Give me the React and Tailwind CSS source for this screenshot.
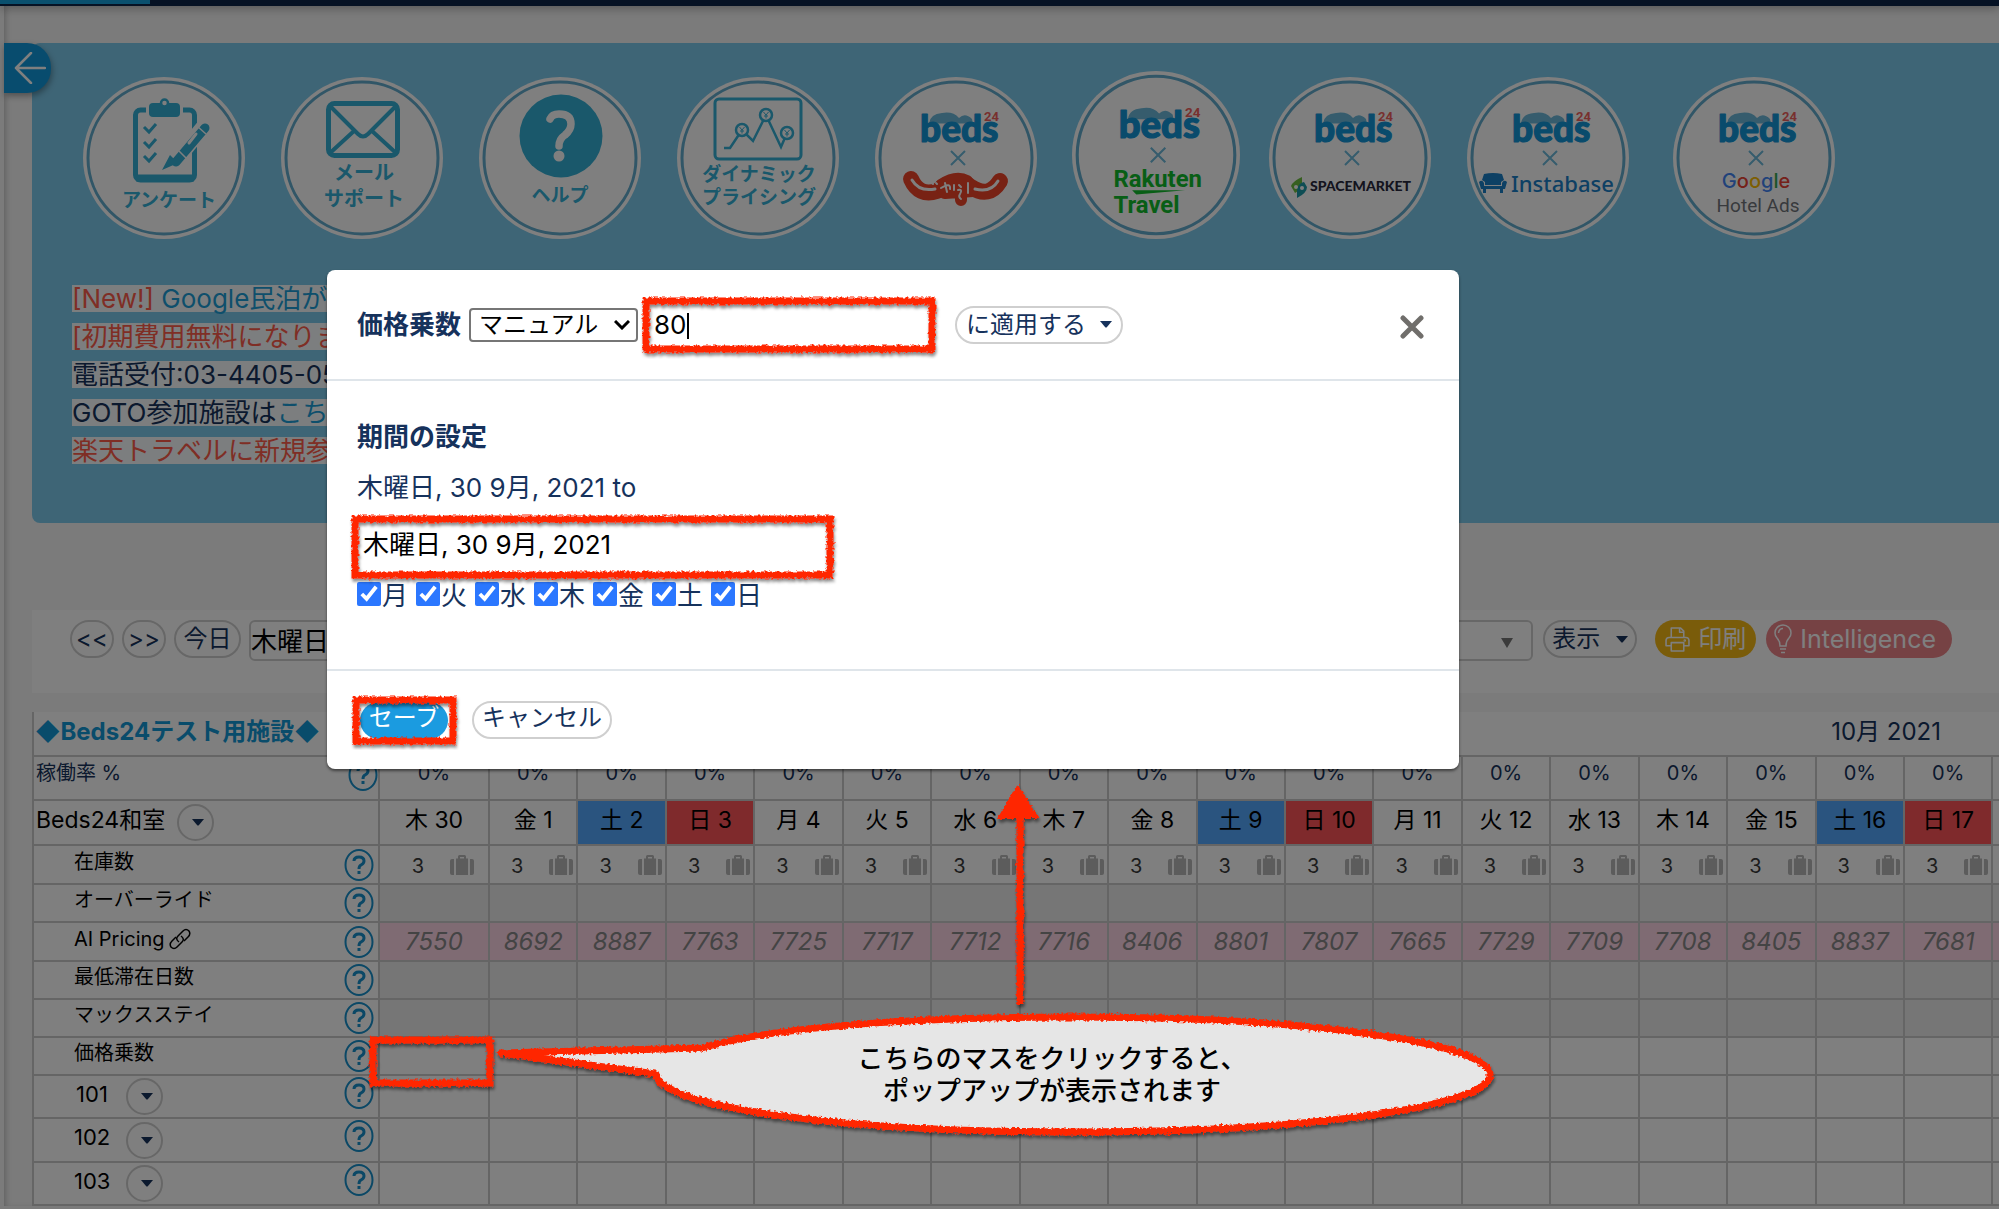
import React from "react";

const TEAL = "#34b0d6";
const BEDS = "#1296d8";
const SKY = "#6cb9da";

const DAYS = [
  ["木 30", "7550"], ["金 1", "8692"], ["土 2", "8887"], ["日 3", "7763"], ["月 4", "7725"],
  ["火 5", "7717"], ["水 6", "7712"], ["木 7", "7716"], ["金 8", "8406"], ["土 9", "8801"],
  ["日 10", "7807"], ["月 11", "7665"], ["火 12", "7729"], ["水 13", "7709"], ["木 14", "7708"],
  ["金 15", "8405"], ["土 16", "8837"], ["日 17", "7681"], ["", ""],
];

function Badge({ label, large, children }) {
  return (
    <button type="button" aria-label={label} className={large ? "block size-[168px]" : "block size-[162px]"}>
      <svg viewBox="0 0 162 162" className="size-full">
        <circle cx="81" cy="81" r="81" fill="#fff" />
        <circle cx="81" cy="81" r="76" fill="none" stroke="#62acce" strokeWidth="3" />
        {children}
      </svg>
    </button>
  );
}

function Caption({ y, size = 19, x = 83, children }) {
  return (
    <text x={x} y={y} textAnchor="middle" fontSize={size} fontWeight="700" fill={TEAL}>
      {children}
    </text>
  );
}

function BedsLogo() {
  return (
    <g>
      <path d="M54 46.500 Q55 37 67 36 Q78 34 84 41 Q90 35 97 42 L98 46.500 Z" fill={SKY} />
      <text x="45" y="65" fontFamily="Lato" fontWeight="900" fontSize="37" fill={BEDS} stroke={BEDS} strokeWidth="1.200" strokeLinejoin="round">beds</text>
      <text x="109" y="44" fontFamily="Roboto" fontWeight="700" fontSize="13" fill="#f0605c">24</text>
      <path d="M76 74 L90 88 M90 74 L76 88" stroke={SKY} strokeWidth="2" fill="none" />
    </g>
  );
}

function Yen({ x, y }) {
  return (
    <g>
      <circle cx={x} cy={y} r="6" fill="#fff" />
      <path d={`M${x - 2.5} ${y - 3} L${x} ${y} L${x + 2.5} ${y - 3} M${x} ${y} V${y + 3.5} M${x - 2} ${y + 1} H${x + 2}`} strokeWidth="1" />
    </g>
  );
}

function Badges() {
  return (
    <ul className="flex items-end">
      <li className="w-[198px] shrink-0">
        <Badge label="アンケート">
          <g fill="none" stroke={TEAL}>
            <rect x="52.500" y="33" width="59" height="70" rx="5" strokeWidth="5" />
            <path d="M53 101 H111" strokeWidth="7" />
            <path d="M61 50 L66 55 L73 47 M61 65 L66 70 L73 62 M61 79 L66 84 L73 76" strokeWidth="3" />
          </g>
          <rect x="63" y="22" width="37" height="19" fill="#fff" />
          <rect x="66" y="26" width="31" height="14" rx="4" fill={TEAL} />
          <circle cx="81.500" cy="26" r="3.500" fill="#fff" stroke={TEAL} strokeWidth="2.500" />
          <path d="M121 49 L96 80" stroke="#fff" strokeWidth="15" />
          <path d="M122 51 L93 85" stroke={TEAL} strokeWidth="9" strokeLinecap="round" />
          <path d="M87 78 L95 86 L79 93 Z" fill={TEAL} />
          <path d="M113 57 L106 66" stroke="#fff" strokeWidth="3" strokeLinecap="round" />
          <path d="M114 49 L123 57 M96 74 L103 81" stroke="#fff" strokeWidth="1.500" />
          <Caption x={86} y={130}>アンケート</Caption>
        </Badge>
      </li>
      <li className="w-[198px] shrink-0">
        <Badge label="メールサポート">
          <g fill="none" stroke={TEAL} strokeWidth="5">
            <rect x="47.500" y="26.500" width="69" height="52" rx="6" />
            <path d="M49 29 L77 57 Q82 62 87 57 L115 29" strokeWidth="4" />
            <path d="M49 76 L73 54 M115 76 L91 54" strokeWidth="4" />
          </g>
          <Caption y={103} size={20}>メール</Caption>
          <Caption y={129} size={20}>サポート</Caption>
        </Badge>
      </li>
      <li className="w-[198px] shrink-0">
        <Badge label="ヘルプ">
          <circle cx="82" cy="59" r="41.500" fill={TEAL} />
          <path d="M71 42 Q73 37 80 37 Q92 37 92 47 Q92 53 86 58 Q80 62 80 69" fill="none" stroke="#fff" strokeWidth="7.500" strokeLinecap="round" />
          <circle cx="80" cy="79" r="5.500" fill="#fff" />
          <Caption x={81} y={125}>ヘルプ</Caption>
        </Badge>
      </li>
      <li className="w-[198px] shrink-0">
        <Badge label="ダイナミックプライシング">
          <g fill="none" stroke={TEAL} strokeWidth="2.500">
            <rect x="38" y="22" width="86" height="60" rx="4" strokeWidth="3" />
            <path d="M47 71 H53 L65 53 L76 64 L89 38 L104 70 L110 56" />
            <Yen x={65} y={53} />
            <Yen x={89} y={38} />
            <Yen x={110} y={56} />
          </g>
          <Caption x={82} y={104}>ダイナミック</Caption>
          <Caption x={82} y={127}>プライシング</Caption>
        </Badge>
      </li>
      <li className="w-[197px] shrink-0">
        <Badge label="beds24 × じゃらん">
          <BedsLogo />
          <g fill="none" strokeLinecap="round" strokeLinejoin="round">
            <path d="M36 102 Q44 120 62 114 Q72 106 81 106 Q89 104 96 110 Q114 122 125 104" stroke="#f04428" strokeWidth="16" />
            <path d="M66 108 Q81 98 92 104 L98 114 L70 116 Z M86 112 V123" fill="#f04428" stroke="#f04428" strokeWidth="12" />
            <path d="M37 103 Q44 115 60 112 M100 112 Q116 116 123 104" stroke="#fff" strokeWidth="3" />
            <path d="M57 106 L58 107 M61 106 L62 107 M66 111 Q76 105 75 112 M70 106 L72 115 M79 108 V113 M84 108 L86 110 M83 113 Q88 112 85 117 Q83 120 86 122 M93 106 V116" stroke="#fff" strokeWidth="2" />
          </g>
        </Badge>
      </li>
      <li className="w-[197px] shrink-0">
        <Badge label="beds24 × Rakuten Travel" large>
          <BedsLogo />
          <g fontFamily="Roboto" fontWeight="700" fontSize="23" fill="#10bc2c">
            <text x="40" y="112">Rakuten</text>
            <text x="40" y="137">Travel</text>
          </g>
          <path d="M58 115 H109 L62 119 Z" fill="#10bc2c" />
        </Badge>
      </li>
      <li className="w-[198px] shrink-0">
        <Badge label="beds24 × SPACEMARKET">
          <BedsLogo />
          <path d="M22 109 Q24 104 33 100 V108 Q30 114 26 116 Z" fill="#6cbf40" />
          <path d="M38 110 Q38 116 28 121 V112 Q30 106 35 105 Z" fill="#1c9aa8" />
          <circle cx="27" cy="110" r="2" fill="#fff" />
          <circle cx="33" cy="111" r="2" fill="#fff" />
          <text x="41" y="114" fontFamily="Lato" fontWeight="900" fontSize="14" fill="#28283c">SPACEMARKET</text>
        </Badge>
      </li>
      <li className="w-[198px] shrink-0">
        <Badge label="beds24 × Instabase">
          <BedsLogo />
          <path d="M17 97 Q26 95 35 97 L37 103 L34 105 V108 H18 V105 L15 103 Z" fill="#1a80c8" />
          <path d="M12 105 Q15 102 17 106 V109 H35 V106 Q37 102 40 105 L38 112 H14 Z M16 112 H19 V116 H16 Z M33 112 H36 V116 H33 Z" fill="#1a80c8" />
          <text x="44" y="115" fontFamily="Noto Sans" fontWeight="500" fontSize="22" fill="#1a80c8">Instabase</text>
        </Badge>
      </li>
      <li className="ml-2 shrink-0">
        <Badge label="beds24 × Google Hotel Ads">
          <BedsLogo />
          <text x="83" y="111" textAnchor="middle" fontFamily="Inter" fontWeight="500" fontSize="20">
            <tspan fill="#4285f4">G</tspan>
            <tspan fill="#ea4335">o</tspan>
            <tspan fill="#fbbc05">o</tspan>
            <tspan fill="#4285f4">g</tspan>
            <tspan fill="#34a853">l</tspan>
            <tspan fill="#ea4335">e</tspan>
          </text>
          <text x="85" y="135" textAnchor="middle" fontFamily="Roboto" fontSize="19" fill="#70747a">Hotel Ads</text>
        </Badge>
      </li>
    </ul>
  );
}

function Notice({ children }) {
  return (
    <p className="flex h-[38px] items-center">
      <span className="min-w-[320px] bg-white/95 leading-[27px] whitespace-nowrap">{children}</span>
    </p>
  );
}

function Caret() {
  return (
    <svg viewBox="0 0 12 7" className="h-[7px] w-3 shrink-0" fill="#16325c">
      <path d="M0 0 H12 L7 6 Q6 7 5 6 Z" />
    </svg>
  );
}

const pill = "flex h-[38px] shrink-0 items-center justify-center rounded-full border-2 border-[#cfcfcf] bg-white text-2xl leading-none text-[#16325c]";

function Toolbar() {
  return (
    <div className="mt-[87px] flex h-[83px] items-start gap-2.5 bg-white pt-2.5 pr-[47px] pl-[38px]">
      <div className="flex shrink-0 gap-2">
        <button type="button" className={`${pill} w-11`}>&lt;&lt;</button>
        <button type="button" className={`${pill} w-11`}>&gt;&gt;</button>
        <button type="button" className={`${pill} w-[67px]`}>今日</button>
        <input aria-label="開始日" defaultValue="木曜日, 30 9月, 2021" className="h-[41px] w-[300px] rounded-md border-2 border-[#cfcfcf] bg-white pb-0.5 text-[26px] text-black" />
      </div>
      <div className="relative min-w-0 flex-1">
        <select aria-label="部屋" className="h-[41px] w-full appearance-none rounded-md border-2 border-[#cfcfcf] bg-white">
          <option></option>
        </select>
        <svg viewBox="0 0 12 10" className="pointer-events-none absolute top-[18px] right-5 h-2.5 w-3" fill="#777"><path d="M0 0 H12 L6 10 Z" /></svg>
      </div>
      <button type="button" className={`${pill} mr-2 w-[94px] gap-4`}>表示<Caret /></button>
      <button type="button" className="flex h-[38px] shrink-0 items-center gap-2 rounded-full bg-[#f4b815] px-2.5 text-2xl leading-none text-white">
        <svg viewBox="0 0 24 24" className="size-[25px]" fill="none" stroke="currentColor" strokeWidth="1.500" strokeLinejoin="round">
          <path d="M6 10 V1 H15 L18 4 V10 M14 1 V5 H18" />
          <path d="M6 18 H1 V13 Q1 10 4 10 H20 Q23 10 23 13 V18 H18" />
          <path d="M6 15 H18 V23 H6 Z" />
          <circle cx="19" cy="13" r="0.500" />
        </svg>
        印刷
      </button>
      <button type="button" className="flex h-[38px] shrink-0 items-center gap-2 rounded-full bg-[#ec8489] pr-4 pl-2 text-[25px] leading-none text-white">
        <svg viewBox="0 0 18 30" className="h-[30px] w-[18px]" fill="none" stroke="currentColor" strokeWidth="1.500">
          <path d="M6 22 Q6 17 3 14 Q1 12 1 9 A8 8 0 0 1 17 9 Q17 12 15 14 Q12 17 12 22 Z" />
          <path d="M6 25 H12 M7 28.500 H11 M4.500 9 Q5 4.500 9 4.500" />
        </svg>
        Intelligence
      </button>
    </div>
  );
}

function Help() {
  return (
    <button type="button" aria-label="ヘルプ" className="block shrink-0">
      <svg viewBox="0 0 30 32" className="h-8 w-[30px]" fill="none" stroke="#1690cc">
        <ellipse cx="15" cy="16" rx="13.500" ry="15" strokeWidth="2" />
        <path d="M10 12 Q10 8 15 8 Q20 8 20 12 Q20 14.500 17 16 Q15 17 15 20" strokeWidth="3" />
        <path d="M15 22 V25" strokeWidth="3" />
      </svg>
    </button>
  );
}

function MenuButton({ label }) {
  return (
    <button type="button" aria-label={label} className="flex size-[37px] shrink-0 items-center justify-center rounded-full border-2 border-[#cfcfcf] bg-white pl-1">
      <Caret />
    </button>
  );
}

function Luggage() {
  return (
    <svg viewBox="0 0 24 21" className="h-[21px] w-6 shrink-0" fill="#b8b8b8">
      <path d="M2 4 H4 V20 H2 Q0 20 0 18 V6 Q0 4 2 4 Z M20 4 H22 Q24 4 24 6 V18 Q24 20 22 20 H20 Z" />
      <path fillRule="evenodd" d="M6 3.500 H8 V1.500 Q8 0 9.500 0 H14.500 Q16 0 16 1.500 V3.500 H18 V20 H6 Z M10 2 H14 V3.500 H10 Z" />
    </svg>
  );
}

const line = "border-2 border-[#cacaca]";

const ROWS = [
  { label: "在庫数", kind: "stock", h: "h-[39px]" },
  { label: "オーバーライド", kind: "grey", h: "h-[38px]" },
  { label: "AI Pricing", kind: "price", h: "h-[39px]" },
  { label: "最低滞在日数", kind: "grey", h: "h-[38px]" },
  { label: "マックスステイ", kind: "grey", h: "h-[38px]" },
  { label: "価格乗数", kind: "plain", h: "h-[38px]" },
  { label: "101", kind: "unit", h: "h-[43px]" },
  { label: "102", kind: "unit", h: "h-[44px]" },
  { label: "103", kind: "unit", h: "h-[43px]" },
];

function cellTone(kind) {
  if (kind === "grey") return "bg-[#ececec]";
  if (kind === "price") return "bg-[#ffd6e6]";
  return "bg-white";
}

function dayTone(day) {
  if (day.startsWith("土")) return "bg-[#54a8ff]";
  if (day.startsWith("日")) return "bg-[#ff5558]";
  return "bg-white";
}

function RowLabel({ row }) {
  if (row.kind === "unit") {
    return (
      <div className="flex h-10 items-center justify-between pr-1 pl-10 text-[22px] leading-none font-normal">
        <span className="flex items-center gap-4">
          <span className="w-9 pb-1.5">{row.label}</span>
          <MenuButton label={row.label} />
        </span>
        <span className="pb-2"><Help /></span>
      </div>
    );
  }
  return (
    <div className="flex h-9 items-center justify-between pr-1 pl-10 text-xl leading-none font-normal">
      <span className="flex items-center gap-1">
        <span className="pb-1.5">{row.label}</span>
        {row.kind === "price" && (
          <svg viewBox="0 0 22 22" className="mb-1.5 size-[22px]" fill="none" stroke="#000" strokeWidth="1.500">
            <path d="M10 14 Q6 11 9 8 L14 3 Q17 0 20 3 Q22 6 19 9 L15 13" />
            <path d="M12 8 Q16 11 13 14 L8 19 Q5 22 2 19 Q0 16 3 13 L7 9" />
          </svg>
        )}
      </span>
      <Help />
    </div>
  );
}

function Calendar() {
  return (
    <table className="mt-[19px] w-[2050px] table-fixed border-collapse bg-white">
      <colgroup>
        <col className="w-[346px]" />
        <col className="w-[110px]" />
        {DAYS.slice(1).map((d, i) => <col key={i} />)}
      </colgroup>
      <thead>
        <tr className="h-[44px]">
          <th className="border-b-2 border-l-2 border-[#cacaca] p-0 pb-1 pl-px text-left text-2xl leading-none font-bold whitespace-nowrap text-[#1398d6]">◆Beds24テスト用施設◆</th>
          <th colSpan="15" className="border-b-2 border-[#cacaca]"></th>
          <th colSpan="4" className="border-b-2 border-[#cacaca] p-0 pr-9 pb-1 text-center text-2xl leading-none font-normal text-[#16325c]">10月 2021</th>
        </tr>
        <tr className="h-[44px]">
          <th className={`${line} p-0`}>
            <div className="flex h-[38px] items-center justify-between pl-0.5 text-xl leading-none font-normal text-[#16325c]">
              <span className="pb-2.5">稼働率 %</span>
              <span className="pb-1.5"><Help /></span>
            </div>
          </th>
          {DAYS.map((d, i) => (
            <td key={i} className={`${line} p-0 pb-2.5 text-center text-xl leading-none text-[#16325c]`}>{d[0] && "0%"}</td>
          ))}
        </tr>
        <tr className="h-[45px]">
          <th className={`${line} p-0`}>
            <div className="flex items-center gap-3 pl-0.5 text-[23px] leading-none font-normal">
              <span className="pb-1">Beds24和室</span> <MenuButton label="Beds24和室" />
            </div>
          </th>
          {DAYS.map((d, i) => (
            <th key={i} className={`${line} ${dayTone(d[0])} p-0 pb-1 text-center text-[23px] leading-none font-normal`}>{d[0]}</th>
          ))}
        </tr>
      </thead>
      <tbody>
        {ROWS.map((row) => (
          <tr key={row.label} className={row.h}>
            <th className={`${line} p-0`}><RowLabel row={row} /></th>
            {DAYS.map((d, i) => (
              <td key={i} className={`${line} ${cellTone(row.kind)} overflow-hidden p-0`}>
                {row.kind === "price" && <div className="text-center text-2xl leading-none text-[#888] italic">{d[1]}</div>}
                {row.kind === "stock" && d[0] && (
                  <div className="flex items-center justify-center gap-[26px] pt-0.5 pl-[18px] text-xl leading-none text-[#3a3a3a]">
                    <span>3</span>
                    <Luggage />
                  </div>
                )}
              </td>
            ))}
          </tr>
        ))}
      </tbody>
    </table>
  );
}

function MarkerFilter() {
  return (
    <svg className="absolute size-0" aria-hidden="true">
      <filter id="marker" x="-10%" y="-20%" width="120%" height="140%" filterUnits="objectBoundingBox">
        <feTurbulence type="fractalNoise" baseFrequency="0.35" numOctaves="2" seed="4" result="n" />
        <feDisplacementMap in="SourceGraphic" in2="n" scale="5" xChannelSelector="R" yChannelSelector="G" result="r" />
        <feDropShadow in="r" dx="1" dy="3" stdDeviation="1.500" floodColor="#000" floodOpacity="0.450" />
      </filter>
    </svg>
  );
}

/* Hand-drawn red outline laid over the control it surrounds. */
function Marked({ children, frame, className = "" }) {
  return (
    <div className={`relative flex w-fit ${className}`}>
      {children}
      <svg className={`pointer-events-none absolute overflow-visible ${frame}`} aria-hidden="true">
        <rect width="100%" height="100%" fill="none" stroke="#ff2600" strokeWidth="7" filter="url(#marker)" />
      </svg>
    </div>
  );
}

function Dialog() {
  return (
    <section role="dialog" aria-label="価格乗数" className="w-full max-w-[1132px] rounded-lg bg-white text-[26px] text-[#16325c] shadow-[0_2px_3px_rgba(0,0,0,0.5)]">
      <header className="flex h-[111px] items-center border-b-2 border-[#dfe5ea] pr-[35px] pl-[30px]">
        <label htmlFor="mode" className="mr-2 shrink-0 leading-none font-bold">価格乗数</label>
        <div className="relative mr-2 shrink-0">
          <select id="mode" className="block h-[34px] w-[169px] appearance-none rounded-sm border-2 border-[#767676] bg-white pl-2 text-2xl leading-none text-black">
            <option>マニュアル</option>
          </select>
          <svg viewBox="0 0 16 10" className="pointer-events-none absolute top-3 right-2 h-2.5 w-4" fill="none" stroke="#000" strokeWidth="3"><path d="M1 1 L8 8 L15 1" /></svg>
        </div>
        <Marked frame="inset-0 size-full">
          <input aria-label="値" defaultValue="80" className="h-[48px] w-[286px] bg-white pl-2 text-[26px] text-black outline-none" />
          <span className="absolute top-3 left-[41px] h-[26px] w-0.5 bg-black" />
        </Marked>
        <button type="button" className={`${pill} ml-[23px] w-[168px] gap-3.5`}>に適用する<Caret /></button>
        <button type="button" aria-label="閉じる" className="ml-auto pt-1">
          <svg viewBox="0 0 24 24" className="size-6" fill="none" stroke="#706e6b" strokeWidth="5" strokeLinecap="round"><path d="M3 3 L21 21 M21 3 L3 21" /></svg>
        </button>
      </header>
      <div className="h-[288px] pt-[30px] pl-[30px]">
        <h2 className="leading-[52px] font-bold">期間の設定</h2>
        <label htmlFor="until" className="block leading-[50px]">木曜日, 30 9月, 2021 to</label>
        <Marked className="mt-1.5" frame="-inset-x-0.5 inset-y-0 h-full w-[calc(100%+4px)]">
          <input id="until" defaultValue="木曜日, 30 9月, 2021" className="h-14 w-[471px] rounded-md bg-transparent pb-2.5 pl-1.5 text-[26px] text-black outline-none" />
        </Marked>
        <div className="mt-1 flex gap-2">
          {["月", "火", "水", "木", "金", "土", "日"].map((d) => (
            <label key={d} className="flex items-start gap-px leading-[34px]">
              <input type="checkbox" defaultChecked className="mt-[3px] size-6 accent-[#2b77ff]" />
              {d}
            </label>
          ))}
        </div>
      </div>
      <footer className="flex h-[100px] items-center gap-6 border-t-2 border-[#dfe5ea] pl-[33px]">
        <Marked frame="-inset-x-1 -inset-y-0.5 h-[calc(100%+4px)] w-[calc(100%+9px)]">
          <button type="button" className="h-[37px] w-[88px] rounded-full bg-[#1b9be0] pb-1 text-2xl leading-none text-white">セーブ</button>
        </Marked>
        <button type="button" className={`${pill} w-[140px] pb-1`}>キャンセル</button>
      </footer>
    </section>
  );
}

function Annotations() {
  return (
    <div className="pointer-events-none absolute top-0 left-0">
      <svg width="1520" height="1209" viewBox="0 0 1520 1209" aria-hidden="true">
        <g filter="url(#marker)">
          <rect x="373" y="1040" width="117" height="43" fill="none" stroke="#ff2600" strokeWidth="7" />
          <path d="M1020 1004 V815" stroke="#ff2600" strokeWidth="7" />
          <path d="M1018 784 L1039 819 H997 Z" fill="#ff2600" />
          <path d="M501 1053 L702 1048 C770 1027 915 1017 1074 1017 C1310 1017 1490 1043 1490 1075 C1490 1106 1310 1132 1074 1132 C840 1132 660 1107 656 1074 Z" fill="#e6e6e6" stroke="#ff2600" strokeWidth="7" strokeLinejoin="round" />
        </g>
      </svg>
      <p className="absolute top-[1043px] left-[852px] w-[400px] text-center text-[26px] leading-8 font-medium whitespace-nowrap text-black">
        こちらのマスをクリックすると、<br />ポップアップが表示されます
      </p>
    </div>
  );
}

export default function App() {
  return (
    <div lang="ja" className="relative h-screen overflow-hidden bg-[#f6f6f6] font-['Inter','Noto_Sans_CJK_JP',sans-serif] text-black">
      <MarkerFilter />
      <div className="h-1.5 bg-[#0c2448] shadow-[0_2px_10px_rgba(0,0,0,0.35)]">
        <div className="h-1 w-[150px] bg-[#14a0dc]" />
      </div>
      <div className="relative ml-1 pt-[37px] pl-7 shadow-[inset_4px_0_6px_-3px_rgba(0,0,0,0.25)]">
        <button type="button" aria-label="戻る" className="absolute top-[37px] left-0 flex h-[50px] w-[47px] items-center rounded-r-3xl bg-[#1199dd] pl-2.5 shadow-[1px_3px_6px_rgba(0,0,0,0.35)]">
          <svg viewBox="0 0 32 32" className="size-8" fill="none" stroke="#fff" strokeWidth="2.500" strokeLinecap="round" strokeLinejoin="round"><path d="M31 16 H2 M17 1 L2 16 L17 31" /></svg>
        </button>
        <section className="rounded-l-lg bg-[#7dcaec] pt-7 pb-[54px] pl-[51px]">
          <Badges />
          <div className="mt-10 -ml-[11px] text-[26px] text-[#16325c]">
            <Notice><span className="text-[#ff5c4a]">[New!]</span> <a href="#" className="text-[#1c9fd8]">Google民泊が</a></Notice>
            <Notice><span className="text-[#ff5c4a]">[初期費用無料になりま</span></Notice>
            <Notice>電話受付:03-4405-05</Notice>
            <Notice>GOTO参加施設は<a href="#" className="text-[#1c9fd8]">こち</a></Notice>
            <Notice><span className="text-[#ff5c4a]">楽天トラベルに新規参</span></Notice>
          </div>
        </section>
        <Toolbar />
        <Calendar />
      </div>
      <div className="absolute inset-0 bg-black/50 pt-[270px] pr-8 pl-[327px]">
        <Dialog />
      </div>
      <Annotations />
    </div>
  );
}
